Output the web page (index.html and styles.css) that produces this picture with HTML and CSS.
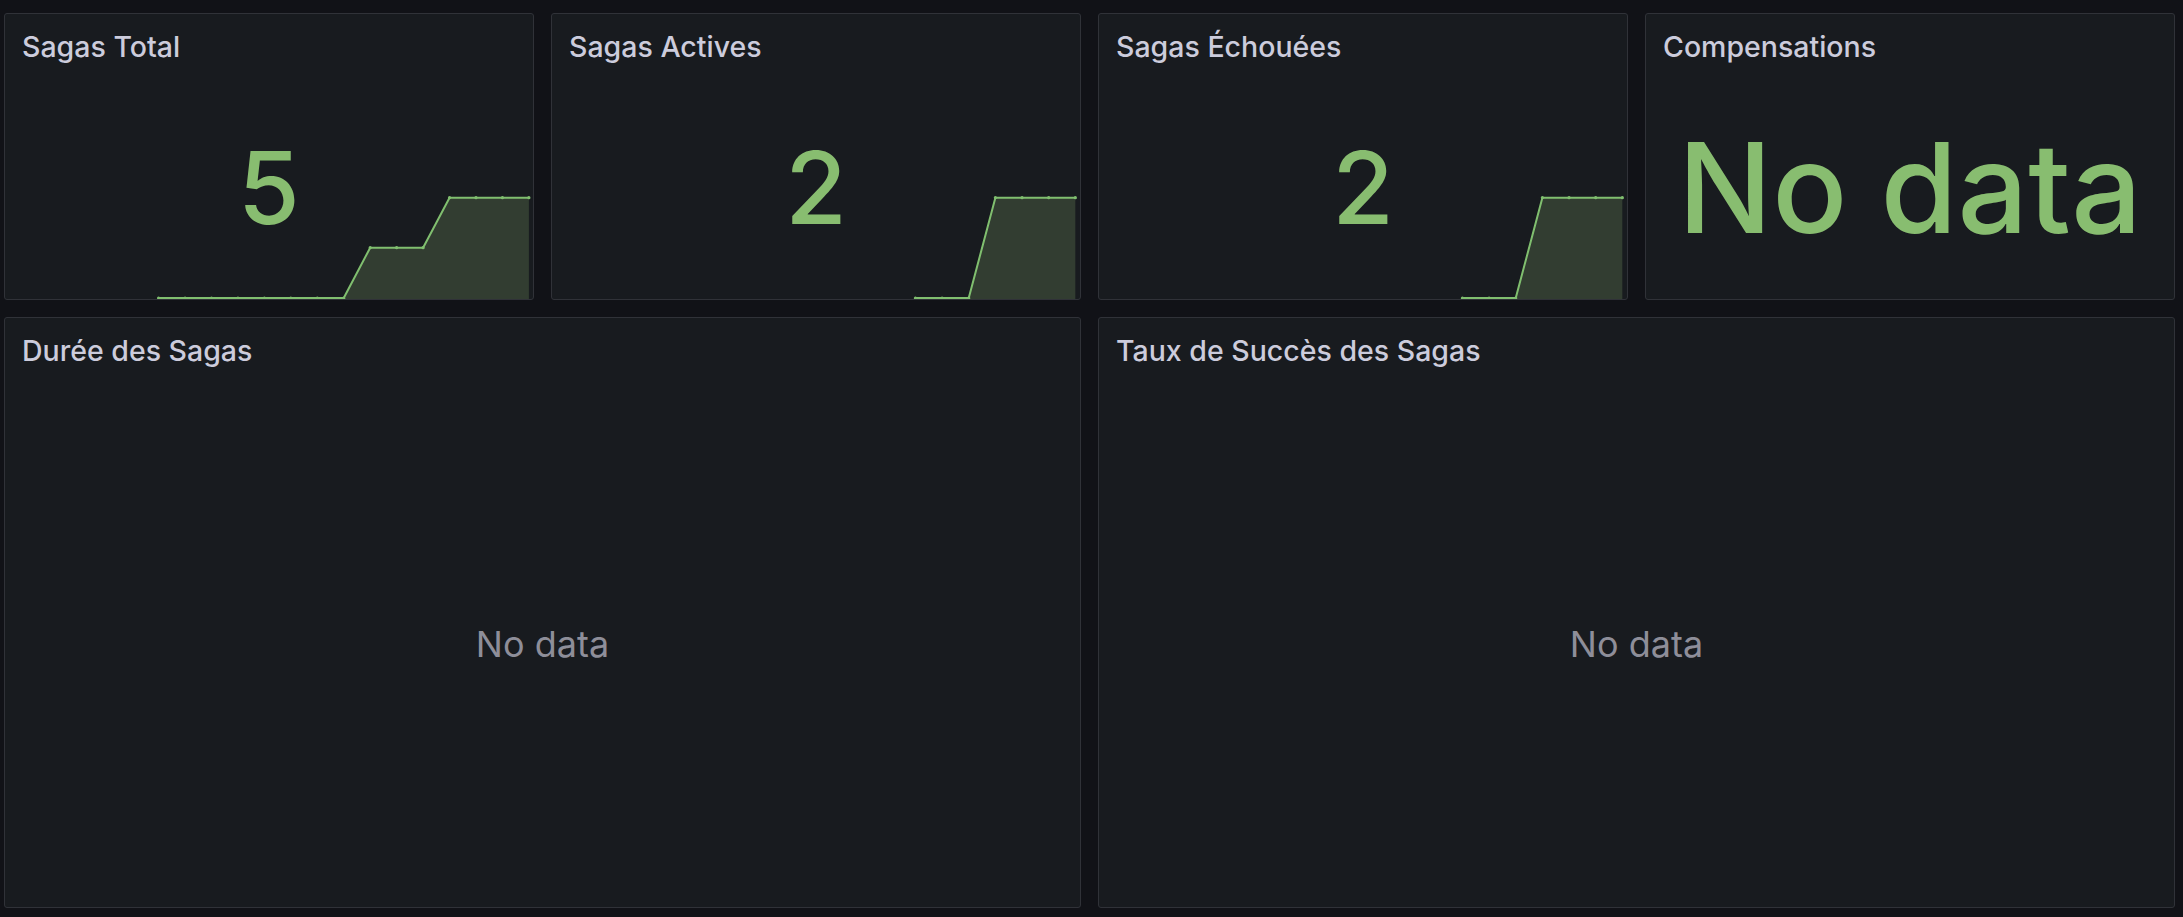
FILE: index.html
```html
<!DOCTYPE html>
<html lang="fr">
<head>
<meta charset="utf-8">
<title>Sagas</title>
<link rel="stylesheet" href="styles.css">
</head>
<body>
<main class="dashboard">
  <section class="panel">
    <header class="panel-header"><h2 class="panel-title">Sagas Total</h2></header>
    <div class="panel-body stat">
      <svg class="sparkline" viewBox="0 0 527 110" preserveAspectRatio="none">
        <polygon class="spark-fill" points="338.1,110 364.5,58.7 417.3,58.7 443.7,8.7 522.9,8.7 522.9,110"/>
        <polyline class="spark-line" points="153.3,109 179.7,109 206.1,109 232.5,109 258.9,109 285.3,109 311.7,109 338.1,109 364.5,58.7 390.9,58.7 417.3,58.7 443.7,8.7 470.1,8.7 496.5,8.7 522.9,8.7"/>
        <g class="spark-dots">
          <circle cx="153.3" cy="109" r="1.6"/><circle cx="179.7" cy="109" r="1.6"/><circle cx="206.1" cy="109" r="1.6"/><circle cx="232.5" cy="109" r="1.6"/><circle cx="258.9" cy="109" r="1.6"/><circle cx="285.3" cy="109" r="1.6"/><circle cx="311.7" cy="109" r="1.6"/><circle cx="338.1" cy="109" r="1.6"/><circle cx="364.5" cy="58.7" r="1.6"/><circle cx="390.9" cy="58.7" r="1.6"/><circle cx="417.3" cy="58.7" r="1.6"/><circle cx="443.7" cy="8.7" r="1.6"/><circle cx="470.1" cy="8.7" r="1.6"/><circle cx="496.5" cy="8.7" r="1.6"/><circle cx="522.9" cy="8.7" r="1.6"/>
        </g>
      </svg>
      <div class="stat-value">5</div>
    </div>
  </section>

  <section class="panel">
    <header class="panel-header"><h2 class="panel-title">Sagas Actives</h2></header>
    <div class="panel-body stat">
      <svg class="sparkline" viewBox="0 0 527 110" preserveAspectRatio="none">
        <polygon class="spark-fill" points="415.95,110 442.55,8.7 522.35,8.7 522.35,110"/>
        <polyline class="spark-line" points="362.75,109 389.35,109 415.95,109 442.55,8.7 469.15,8.7 495.75,8.7 522.35,8.7"/>
        <g class="spark-dots">
          <circle cx="362.75" cy="109" r="1.6"/><circle cx="389.35" cy="109" r="1.6"/><circle cx="415.95" cy="109" r="1.6"/><circle cx="442.55" cy="8.7" r="1.6"/><circle cx="469.15" cy="8.7" r="1.6"/><circle cx="495.75" cy="8.7" r="1.6"/><circle cx="522.35" cy="8.7" r="1.6"/>
        </g>
      </svg>
      <div class="stat-value">2</div>
    </div>
  </section>

  <section class="panel">
    <header class="panel-header"><h2 class="panel-title">Sagas Échouées</h2></header>
    <div class="panel-body stat">
      <svg class="sparkline" viewBox="0 0 527 110" preserveAspectRatio="none">
        <polygon class="spark-fill" points="415.95,110 442.55,8.7 522.35,8.7 522.35,110"/>
        <polyline class="spark-line" points="362.75,109 389.35,109 415.95,109 442.55,8.7 469.15,8.7 495.75,8.7 522.35,8.7"/>
        <g class="spark-dots">
          <circle cx="362.75" cy="109" r="1.6"/><circle cx="389.35" cy="109" r="1.6"/><circle cx="415.95" cy="109" r="1.6"/><circle cx="442.55" cy="8.7" r="1.6"/><circle cx="469.15" cy="8.7" r="1.6"/><circle cx="495.75" cy="8.7" r="1.6"/><circle cx="522.35" cy="8.7" r="1.6"/>
        </g>
      </svg>
      <div class="stat-value">2</div>
    </div>
  </section>

  <section class="panel">
    <header class="panel-header"><h2 class="panel-title">Compensations</h2></header>
    <div class="panel-body stat">
      <div class="stat-value stat-value-large">No data</div>
    </div>
  </section>

  <section class="panel panel-wide">
    <header class="panel-header"><h2 class="panel-title">Durée des Sagas</h2></header>
    <div class="panel-body empty">
      <div class="no-data">No data</div>
    </div>
  </section>

  <section class="panel panel-wide">
    <header class="panel-header"><h2 class="panel-title">Taux de Succès des Sagas</h2></header>
    <div class="panel-body empty">
      <div class="no-data">No data</div>
    </div>
  </section>
</main>
</body>
</html>
```

FILE: styles.css
```css
html, body {
  margin: 0;
  padding: 0;
  background: #111217;
  height: 917px;
  overflow: hidden;
  font-family: Inter, "Noto Sans", "Liberation Sans", sans-serif;
}

.dashboard {
  box-sizing: border-box;
  height: 917px;
  padding: 13px 8px 0 4px;
  display: grid;
  grid-template-columns: repeat(4, 1fr);
  grid-template-rows: 287px 591px;
  column-gap: 17px;
  row-gap: 17px;
}

.panel {
  box-sizing: border-box;
  min-width: 0;
  background: #181b1f;
  border: 1px solid #303238;
  border-radius: 3px;
  display: flex;
  flex-direction: column;
  overflow: hidden;
}

.panel-wide {
  grid-column: span 2;
}

.panel-header {
  flex: none;
  height: 63px;
  box-sizing: border-box;
  padding: 2px 17px 0;
  display: flex;
  align-items: center;
}

.panel-title {
  margin: 0;
  font-size: 28.5px;
  font-weight: 500;
  line-height: 36px;
  color: #ccccdc;
  white-space: nowrap;
}

.panel-body {
  flex: 1;
  min-height: 0;
  display: grid;
}

.panel-body > * {
  grid-area: 1 / 1;
}

.sparkline {
  align-self: end;
  width: 100%;
  height: 110px;
  display: block;
}

.spark-fill {
  fill: #323d31;
}

.spark-line {
  fill: none;
  stroke: #80bf6f;
  stroke-width: 2;
  stroke-linejoin: round;
}

.spark-dots circle {
  fill: #80bf6f;
}

.stat-value {
  align-self: center;
  justify-self: center;
  font-size: 100px;
  font-weight: 500;
  line-height: 1;
  color: #88bd70;
  white-space: nowrap;
}

.stat-value-large {
  font-size: 124.5px;
}

.no-data {
  align-self: center;
  justify-self: center;
  font-size: 36px;
  font-weight: 400;
  line-height: 1;
  color: #8e8e99;
}
```
